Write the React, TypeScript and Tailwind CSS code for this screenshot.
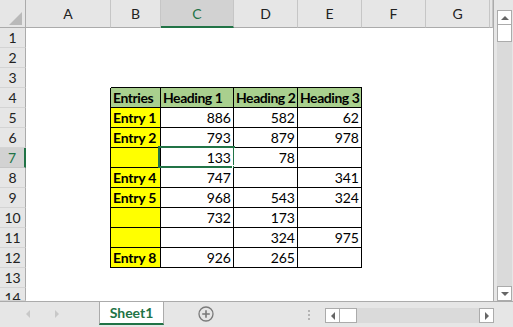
import React from "react";

const COLS = ["A", "B", "C", "D", "E", "F", "G", "H"];

// table body B4:E12
const DATA: Record<number, string[]> = {
  4: ["Entries", "Heading 1", "Heading 2", "Heading 3"],
  5: ["Entry 1", "886", "582", "62"],
  6: ["Entry 2", "793", "879", "978"],
  7: ["", "133", "78", ""],
  8: ["Entry 4", "747", "", "341"],
  9: ["Entry 5", "968", "543", "324"],
  10: ["", "732", "173", ""],
  11: ["", "", "324", "975"],
  12: ["Entry 8", "926", "265", ""],
};

const ROWS = Array.from({ length: 14 }, (_, i) => i + 1);

function Cell({ row, col }: { row: number; col: number }) {
  const inTable = row >= 4 && row <= 12;
  const value = inTable && col >= 1 && col <= 4 ? DATA[row][col - 1] : "";

  // column A carries the left border of the table
  if (col === 0) {
    return <div className={inTable ? "border-r border-black bg-white" : "bg-white"} />;
  }
  if (col >= 1 && col <= 4 && row === 3) {
    return <div className="border-b border-black bg-white" />;
  }
  if (!inTable || col > 4) {
    return <div className="overflow-hidden bg-white" />;
  }

  if (row === 4) {
    return (
      <div className="flex items-end border-r border-b border-black bg-[#a9d08e] pb-[2px] pl-[2px] text-[14px] leading-none font-bold tracking-[-0.45px] text-black whitespace-nowrap overflow-hidden">
        {value}
      </div>
    );
  }
  if (col === 1) {
    return (
      <div className="flex items-end border-r border-b border-black bg-[#ffff00] pb-[2px] pl-[2px] text-[14px] leading-none font-bold tracking-[-0.2px] text-black whitespace-nowrap">
        {value}
      </div>
    );
  }
  return (
    <div className="relative flex items-end justify-end border-r border-b border-black bg-white pb-[2px] pr-[2px] text-[14px] leading-none text-black">
      {value}
      {row === 7 && col === 2 && (
        <>
          <div className="absolute -left-[3px] -top-[2px] -right-[2px] -bottom-[1px] border-2 border-[#217346]" />
          <div className="absolute -right-[4px] -bottom-[3px] h-[5px] w-[5px] border border-white bg-[#217346]" />
        </>
      )}
    </div>
  );
}

function Grid() {
  return (
    <div className="grid w-[494px] shrink-0 grid-cols-[26px_85px_50px_73px_64px_64px_64px_64px_3px] grid-rows-[28px_repeat(13,20px)_13px] border-r border-[#ababab] overflow-hidden">
      {/* corner */}
      <div className="relative border-r border-b border-[#ababab] bg-[#e6e6e6]">
        <svg className="absolute left-0 top-0" width="26" height="28">
          <polygon points="22,12 22,25 9,25" fill="#b9b9b9" />
        </svg>
      </div>
      {COLS.map((c) =>
        c === "C" ? (
          <div
            key={c}
            className="flex items-center justify-center border-r border-b-2 border-r-[#c6c6c6] border-b-[#217346] bg-[#d2d2d2] text-[14px] text-[#217346]"
          >
            {c}
          </div>
        ) : (
          <div
            key={c}
            className="flex items-center justify-center border-r border-b border-r-[#c6c6c6] border-b-[#ababab] bg-[#e6e6e6] text-[14px] text-[#222]"
          >
            {c === "H" ? "" : c}
          </div>
        )
      )}
      {ROWS.map((r) => (
        <React.Fragment key={r}>
          {r === 7 ? (
            <div className="overflow-hidden border-r-2 border-b border-r-[#217346] border-b-[#c6c6c6] bg-[#d2d2d2] text-center text-[14px] leading-[19px] text-[#217346]">
              {r}
            </div>
          ) : (
            <div className="overflow-hidden border-r border-b border-r-[#ababab] border-b-[#d4d4d4] bg-[#e6e6e6] text-center text-[14px] leading-[19px] text-[#222]">
              {r}
            </div>
          )}
          {COLS.map((_, ci) => (
            <Cell key={ci} row={r} col={ci} />
          ))}
        </React.Fragment>
      ))}
    </div>
  );
}

function Arrow({ dir, color = "#666" }: { dir: "up" | "down" | "left" | "right"; color?: string }) {
  const pts = {
    up: "0,5 4,1 8,5",
    down: "0,1 8,1 4,5",
    left: "5,0 5,8 1,4",
    right: "1,0 1,8 5,4",
  }[dir];
  const w = dir === "up" || dir === "down" ? 8 : 6;
  const h = dir === "up" || dir === "down" ? 6 : 8;
  return (
    <svg width={w} height={h}>
      <polygon points={pts} fill={color} />
    </svg>
  );
}

function VScroll() {
  return (
    <div className="flex w-[19px] flex-col bg-[#e6e6e6] pt-[10px] pl-[3px]">
      <div className="flex w-[15px] flex-1 flex-col bg-[#dadada]">
        <div className="flex h-[15px] items-center justify-center border border-[#ababab] bg-white">
          <Arrow dir="up" />
        </div>
        <div className="h-[17px] border border-t-0 border-[#ababab] bg-white" />
        <div className="flex-1" />
        <div className="flex h-[15px] items-center justify-center border border-[#ababab] bg-white">
          <Arrow dir="down" />
        </div>
      </div>
    </div>
  );
}

function TabBar() {
  return (
    <div className="flex h-[26px] border-t border-[#ababab] bg-[#e6e6e6]">
      <div className="flex w-[99px] items-center pb-[2px]">
        <div className="ml-[25px]">
          <Arrow dir="left" color="#c8c8c8" />
        </div>
        <div className="ml-[23px]">
          <Arrow dir="right" color="#c8c8c8" />
        </div>
      </div>
      <div className="flex h-[23px] w-[65px] items-center justify-center border-x border-b-2 border-x-[#ababab] border-b-[#217346] bg-white pb-[1px] text-[14px] font-bold text-[#217346]">
        Sheet1
      </div>
      <div className="flex w-[83px] items-center justify-center pb-[2px]">
        <svg width="16" height="16" viewBox="0 0 16 16">
          <circle cx="8" cy="8" r="7" fill="none" stroke="#7a7a7a" strokeWidth="1.3" />
          <path d="M8 4.2v7.6M4.2 8h7.6" stroke="#7a7a7a" strokeWidth="1.6" />
        </svg>
      </div>
      <div className="ml-[61px] flex w-[3px] flex-col gap-[2px] pt-[8px]">
        <div className="h-[2px] w-[2px] bg-[#b4b4b4]" />
        <div className="h-[2px] w-[2px] bg-[#b4b4b4]" />
        <div className="h-[2px] w-[2px] bg-[#b4b4b4]" />
      </div>
      <div className="ml-[14px] mt-[6px] flex h-[15px] w-[169px] bg-[#dadada]">
        <div className="flex w-[15px] items-center justify-center border border-[#ababab] bg-white">
          <Arrow dir="left" />
        </div>
        <div className="w-[17px] border border-l-0 border-[#ababab] bg-white" />
        <div className="flex-1" />
        <div className="flex w-[15px] items-center justify-center border border-[#ababab] bg-white">
          <Arrow dir="right" />
        </div>
      </div>
    </div>
  );
}

export default function App() {
  return (
    <div className="flex h-[327px] w-[513px] flex-col overflow-hidden bg-[#e6e6e6] font-['Lato',sans-serif]">
      <div className="flex h-[301px]">
        <Grid />
        <VScroll />
      </div>
      <TabBar />
    </div>
  );
}
